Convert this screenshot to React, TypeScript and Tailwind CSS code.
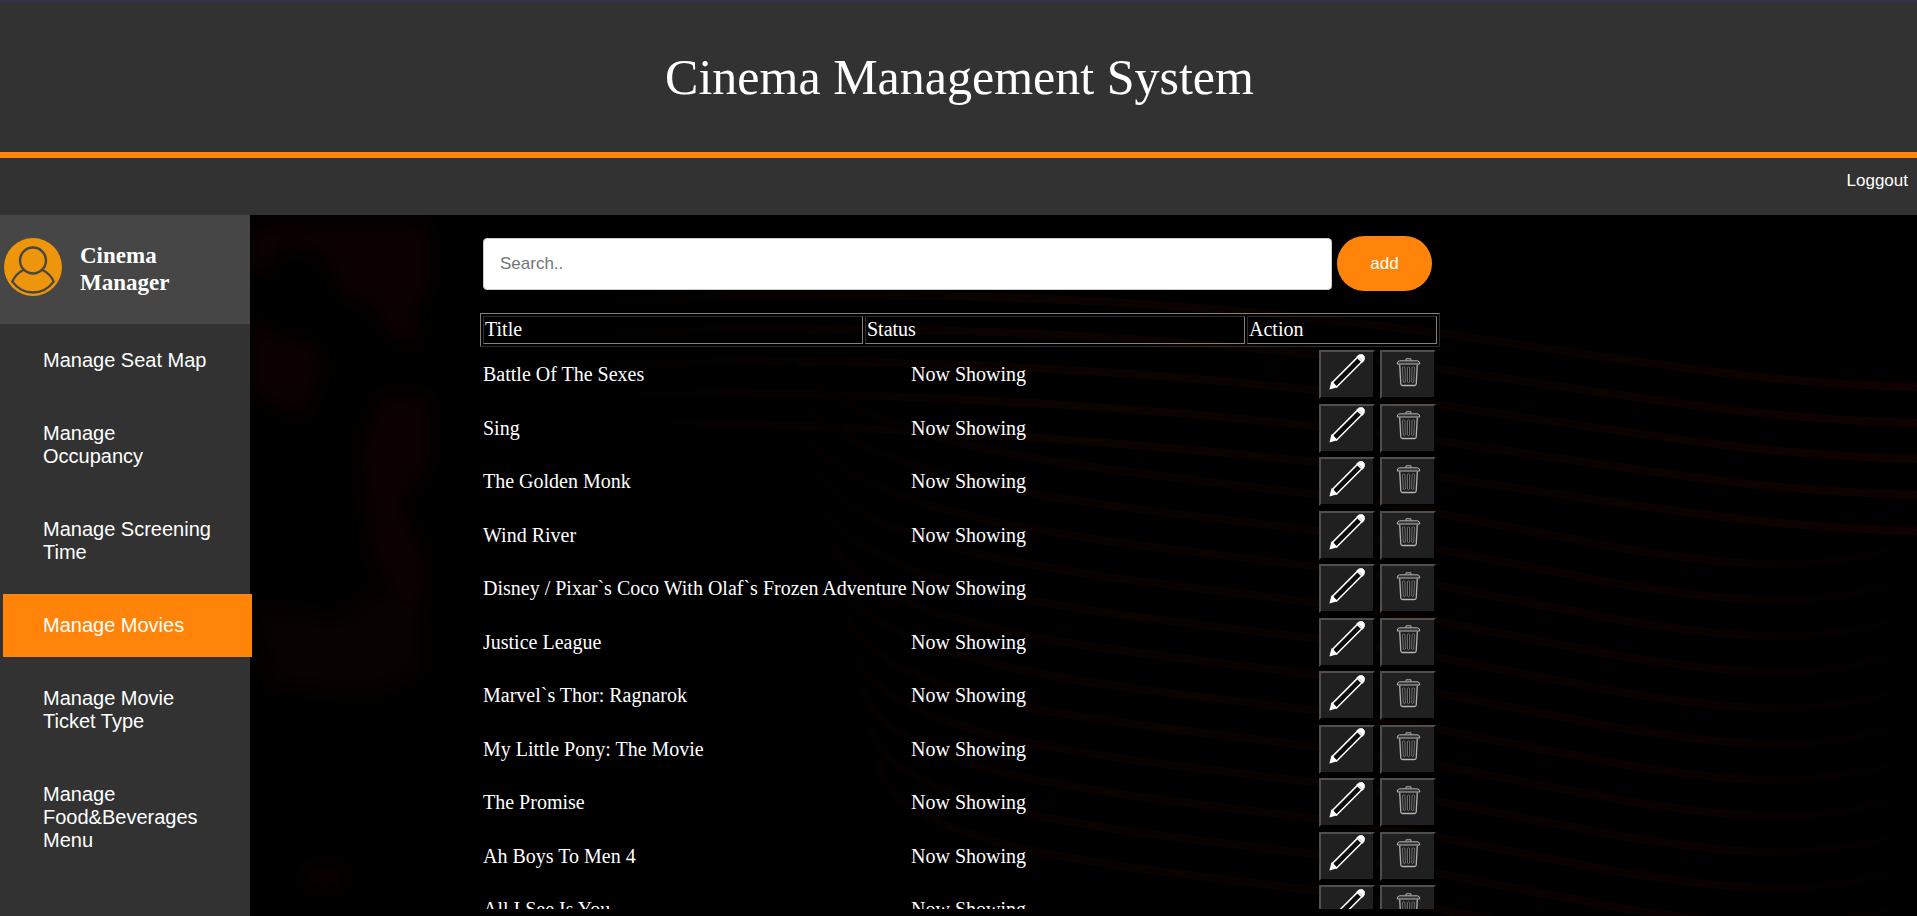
import React from "react";

const menu = [
  { label: "Manage Seat Map" },
  { label: "Manage Occupancy" },
  { label: "Manage Screening Time" },
  { label: "Manage Movies", active: true },
  { label: "Manage Movie Ticket Type" },
  { label: "Manage Food&Beverages Menu" },
];

const movies = [
  "Battle Of The Sexes",
  "Sing",
  "The Golden Monk",
  "Wind River",
  "Disney / Pixar`s Coco With Olaf`s Frozen Adventure",
  "Justice League",
  "Marvel`s Thor: Ragnarok",
  "My Little Pony: The Movie",
  "The Promise",
  "Ah Boys To Men 4",
  "All I See Is You",
];

function Avatar() {
  return (
    <svg viewBox="0 0 58 58" className="size-[58px] shrink-0" aria-hidden="true">
      <circle cx="29" cy="29" r="29" fill="#ed960b" />
      <g fill="none" stroke="#464646" strokeWidth="2.4" strokeLinejoin="round">
        <circle cx="29" cy="22.5" r="13" />
        <path d="M19.3 32 Q11.5 36 8.3 43.6 Q16.5 54.5 29 54.5 Q41.5 54.5 49.7 43.6 Q46.5 36 38.7 32" />
      </g>
    </svg>
  );
}

function PencilIcon() {
  return (
    <svg viewBox="0 0 36 36" className="size-[36px]" aria-hidden="true">
      <path d="M3.2 28.6 L28.4 3.4 L32.8 7.8 L7.6 33 Z" fill="#0c0c0c" stroke="#fff" strokeWidth="1.5" />
      <path d="M0.4 35.6 L2.4 27.6 L4.6 28.6 L5.6 31 L8.4 33.2 Z" fill="#fff" />
      <path d="M27.6 2.8 Q30.4 -0.4 33.6 0.6 Q36.2 2 35.6 5 Q35 7.2 33.4 8.4 Q32.8 4.4 27.6 2.8 Z" fill="#fff" stroke="#fff" strokeWidth="0.6" />
    </svg>
  );
}

function TrashIcon() {
  return (
    <svg viewBox="0 0 25 30" className="h-[30px] w-[25px]" aria-hidden="true" fill="none" stroke="#b4b4b4" strokeWidth="1">
      <path d="M10 3.5 V1.8 H15 V3.5" />
      <path d="M3.5 3.8 H21.5 Q23.8 4 23.8 7 H1.2 Q1.2 4 3.5 3.8 Z" fill="#333" />
      <path d="M3.7 7.5 L4.8 27 Q5 28.5 6.5 28.5 H18.5 Q20 28.5 20.2 27 L21.3 7.5" strokeWidth="1.3" />
      <g fill="#111" stroke="#8a8a8a" strokeWidth="0.8">
        <path d="M6.5 10.5 Q7.7 9.2 8.9 10.5 L9.3 25 Q8.4 26.2 7.3 25 Z" />
        <path d="M11.4 10.5 Q12.5 9.2 13.6 10.5 V25 Q12.5 26.2 11.4 25 Z" />
        <path d="M18.5 10.5 Q17.3 9.2 16.1 10.5 L15.7 25 Q16.6 26.2 17.7 25 Z" />
      </g>
    </svg>
  );
}

function Backdrop() {
  const waves = Array.from({ length: 17 }, (_, i) => 118 + i * 36);
  return (
    <svg
      className="pointer-events-none absolute inset-0 size-full"
      viewBox="0 0 1667 701"
      preserveAspectRatio="none"
      aria-hidden="true"
    >
      <defs>
        <filter id="soft" x="-20%" y="-20%" width="140%" height="140%" colorInterpolationFilters="sRGB">
          <feGaussianBlur stdDeviation="10" />
        </filter>
        <linearGradient id="fade" gradientUnits="userSpaceOnUse" x1="500" y1="0" x2="1640" y2="0">
          <stop offset="0" stopColor="#000" />
          <stop offset="0.3" stopColor="#090300" />
          <stop offset="0.85" stopColor="#090200" />
          <stop offset="1" stopColor="#020000" />
        </linearGradient>
        <linearGradient id="rise" gradientUnits="userSpaceOnUse" x1="300" y1="0" x2="1667" y2="0">
          <stop offset="0" stopColor="#000" />
          <stop offset="0.35" stopColor="#0b0300" />
          <stop offset="0.7" stopColor="#080300" />
          <stop offset="1" stopColor="#0f0200" />
        </linearGradient>
      </defs>
      <g filter="url(#soft)" fill="#0c0100">
        <path d="M0 10 H180 V75 L165 90 L170 130 L145 125 L120 90 L90 80 L75 40 L30 30 L20 60 H0 Z" />
        <path d="M0 100 L25 120 L60 125 L75 150 L50 210 L30 190 L0 180 Z" />
        <path d="M130 180 H180 V250 L150 290 L175 340 L172 400 L150 385 L120 340 L110 230 Z" />
        <path d="M0 390 L90 400 L125 370 L175 400 V455 L130 480 L20 475 Z" fill="#080200" />
        <ellipse cx="75" cy="662" rx="22" ry="12" />
      </g>
      <g fill="none" strokeWidth="8">
        {waves.map((y, i) => (
          <path
            key={y}
            stroke={i < 5 ? "url(#rise)" : "url(#fade)"}
            d={
              i < 5
                ? `M${300 + i * 30} ${y - 30 - i * 6} C700 ${y - 50} 980 ${y - 28} 1187 ${y} S1500 ${y + 50} 1667 ${y + 54}`
                : `M${500 + i * 8} ${y - 150} C640 ${y - 40} 980 ${y - 40} 1187 ${y} S1520 ${y + 70} 1640 ${y + 36}`
            }
          />
        ))}
      </g>
    </svg>
  );
}

const rowButton =
  "flex h-[49px] w-[56px] items-center justify-center border-2 border-t-[#4f4f4f] border-r-black border-b-black border-l-[#4f4f4f] bg-[#202020] pb-[6px]";
const headCell =
  "border border-t-[#2c2c2c] border-r-[#808080] border-b-[#808080] border-l-[#2c2c2c] px-[1px] pt-[1px] pb-[2px] text-left font-normal";

export default function App() {
  return (
    <div className="flex h-screen flex-col overflow-hidden bg-black font-['Liberation_Serif',serif] text-[20px] leading-[23px] text-white">
      <header className="shrink-0 border-t-2 border-b-[6px] border-t-[#323346] border-b-[#ff8409] bg-[#323232] pt-[46px] pb-[46px] pl-[2px]">
        <h1 className="text-center text-[50px] leading-[58px]">Cinema Management System</h1>
      </header>
      <nav className="flex h-[57px] shrink-0 justify-end bg-[#323232] px-[9px] pt-[13px] font-['Liberation_Sans',sans-serif] text-[17px] leading-5">
        <a href="#logout">Loggout</a>
      </nav>
      <div className="flex min-h-0 flex-1">
        <aside className="z-10 w-[250px] shrink-0 bg-[#323232]">
          <div className="flex h-[109px] items-start gap-[18px] bg-[#464646] pt-[23px] pl-[4px]">
            <Avatar />
            <h2 className="w-[110px] pt-1 text-[23px] leading-[27px] font-bold">Cinema Manager</h2>
          </div>
          <ul className="flex w-[252px] flex-col gap-[10px] pt-[5px] pl-[3px] font-['Liberation_Sans',sans-serif]">
            {menu.map((item) => (
              <li key={item.label}>
                <a
                  href="#menu"
                  className={
                    item.active
                      ? "block bg-[#ff8409] py-5 pr-8 pl-10"
                      : "block py-5 pr-8 pl-10"
                  }
                >
                  {item.label}
                </a>
              </li>
            ))}
          </ul>
        </aside>
        <main className="relative min-w-0 flex-1 bg-black">
          <Backdrop />
          <div className="relative grid h-full grid-cols-[230fr_960fr_477fr]">
            <section className="col-start-2 flex min-h-0 min-w-0 flex-col pt-[21px] pb-[7px]">
              <form
                className="flex shrink-0 items-center gap-[5px] pr-2 pl-[3px] font-['Liberation_Sans',sans-serif] text-[17px] leading-5"
                onSubmit={(e) => e.preventDefault()}
              >
                <input
                  type="text"
                  aria-label="Search"
                  placeholder="Search.."
                  className="h-[52px] min-w-0 flex-1 rounded border border-[#ccc] bg-white px-4 text-black placeholder:text-[#757575]"
                />
                <button type="submit" className="h-[55px] w-[95px] shrink-0 rounded-full bg-[#ff8409]">
                  add
                </button>
              </form>
              <table className="mt-[22px] w-full shrink-0 table-fixed border-separate border-spacing-[2px] border border-t-[#808080] border-r-[#2c2c2c] border-b-[#2c2c2c] border-l-[#808080]">
                <thead>
                  <tr>
                    <th className={headCell + " w-2/5"}>Title</th>
                    <th className={headCell + " w-2/5"}>Status</th>
                    <th className={headCell + " w-1/5"}>Action</th>
                  </tr>
                </thead>
              </table>
              <div className="mt-[1px] min-h-0 flex-1 overflow-y-auto [scrollbar-width:none]">
                <table className="w-full border-separate border-spacing-0" aria-label="Movies">
                  <tbody>
                    {movies.map((title) => (
                      <tr key={title} className="odd:h-[53px] even:h-[54px]">
                        <td className="w-[431px] pl-[3px] whitespace-nowrap">{title}</td>
                        <td>Now Showing</td>
                        <td className="w-[121px]">
                          <div className="flex gap-[5px]">
                            <button type="button" aria-label="Edit" className={rowButton}>
                              <PencilIcon />
                            </button>
                            <button type="button" aria-label="Delete" className={rowButton}>
                              <TrashIcon />
                            </button>
                          </div>
                        </td>
                      </tr>
                    ))}
                  </tbody>
                </table>
              </div>
            </section>
          </div>
        </main>
      </div>
    </div>
  );
}
